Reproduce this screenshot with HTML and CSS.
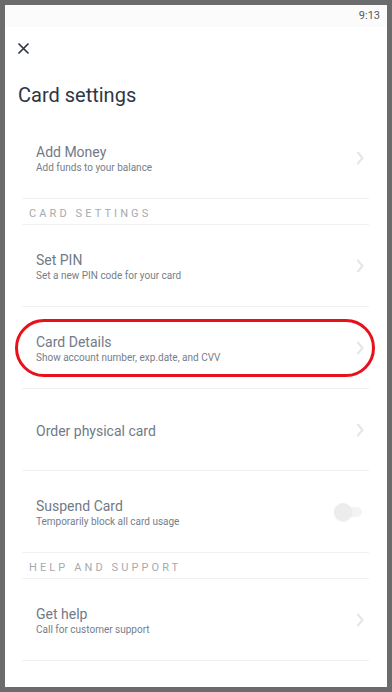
FILE: index.html
```html
<!DOCTYPE html>
<html lang="en">
<head>
	<meta charset="UTF-8">
	<meta name="viewport" content="width=device-width, initial-scale=1.0">
	<title>Card settings</title>
	<link rel="stylesheet" href="styles.css">
</head>
<body>
	<div class="screen">
		<div class="statusBar">9:13</div>

		<div class="closeRow">
			<svg class="closeIcon" width="11" height="11" viewBox="0 0 11 11">
				<path d="M1 1 L10 10 M10 1 L1 10" stroke="#2f3640" stroke-width="1.7" stroke-linecap="round" fill="none"/>
			</svg>
		</div>

		<h1 class="pageTitle">Card settings</h1>

		<div class="list">
			<div class="row">
				<div class="rowText">
					<div class="rowTitle">Add Money</div>
					<div class="rowSub">Add funds to your balance</div>
				</div>
				<svg class="chevron" width="8" height="14" viewBox="0 0 8 14"><path d="M1.5 1 L6.5 7 L1.5 13" stroke="#e2e5e9" stroke-width="2" fill="none"/></svg>
			</div>

			<div class="sectionHead">CARD SETTINGS</div>

			<div class="row">
				<div class="rowText">
					<div class="rowTitle">Set PIN</div>
					<div class="rowSub">Set a new PIN code for your card</div>
				</div>
				<svg class="chevron" width="8" height="14" viewBox="0 0 8 14"><path d="M1.5 1 L6.5 7 L1.5 13" stroke="#e2e5e9" stroke-width="2" fill="none"/></svg>
			</div>

			<div class="row highlighted">
				<div class="rowText">
					<div class="rowTitle">Card Details</div>
					<div class="rowSub">Show account number, exp.date, and CVV</div>
				</div>
				<svg class="chevron" width="8" height="14" viewBox="0 0 8 14"><path d="M1.5 1 L6.5 7 L1.5 13" stroke="#e2e5e9" stroke-width="2" fill="none"/></svg>
				<div class="redMark"></div>
			</div>

			<div class="row">
				<div class="rowText">
					<div class="rowTitle">Order physical card</div>
				</div>
				<svg class="chevron" width="8" height="14" viewBox="0 0 8 14"><path d="M1.5 1 L6.5 7 L1.5 13" stroke="#e2e5e9" stroke-width="2" fill="none"/></svg>
			</div>

			<div class="row">
				<div class="rowText">
					<div class="rowTitle">Suspend Card</div>
					<div class="rowSub">Temporarily block all card usage</div>
				</div>
				<div class="toggle"><div class="knob"></div></div>
			</div>

			<div class="sectionHead">HELP AND SUPPORT</div>

			<div class="row">
				<div class="rowText">
					<div class="rowTitle">Get help</div>
					<div class="rowSub">Call for customer support</div>
				</div>
				<svg class="chevron" width="8" height="14" viewBox="0 0 8 14"><path d="M1.5 1 L6.5 7 L1.5 13" stroke="#e2e5e9" stroke-width="2" fill="none"/></svg>
			</div>
		</div>
	</div>
</body>
</html>
```

FILE: styles.css
```css
html, body{
	margin: 0;
	padding: 0;
}
body{
	background: #6b6b6b;
	font-family: Roboto, "Liberation Sans", sans-serif;
	width: 392px;
	height: 692px;
	padding: 5px;
	box-sizing: border-box;
}
.screen{
	width: 382px;
	height: 682px;
	background: #ffffff;
	overflow: hidden;
}
.statusBar{
	height: 22px;
	background: #fbfbfb;
	color: #555a60;
	font-size: 11px;
	line-height: 22px;
	text-align: right;
	padding-right: 7px;
}
.closeRow{
	height: 11px;
	padding: 16px 0 0 13px;
}
.closeIcon{
	display: block;
}
.pageTitle{
	margin: 29px 0 10px 13px;
	font-size: 20px;
	line-height: 24px;
	font-weight: 400;
	color: #2f3643;
}
.list{
	margin: 0 18px 0 17px;
}
.row{
	height: 81px;
	border-bottom: 1px solid #eef0f2;
	display: flex;
	align-items: center;
	justify-content: space-between;
	padding: 0 5px 0 14px;
	position: relative;
}
.rowText{
	padding-top: 3px;
}
.rowTitle{
	font-size: 14px;
	line-height: 17px;
	color: #717a87;
}
.rowSub{
	font-size: 10px;
	line-height: 14px;
	color: #767e8a;
}
.chevron{
	display: block;
}
.sectionHead{
	height: 25px;
	border-bottom: 1px solid #eef0f2;
	padding-left: 7px;
	font-size: 11px;
	line-height: 29px;
	letter-spacing: 3.1px;
	color: #a6aab0;
}
.toggle{
	width: 26px;
	height: 10px;
	border-radius: 5px;
	background: #f3f3f3;
	position: relative;
	margin-right: 2px;
}
.knob{
	position: absolute;
	left: -2px;
	top: -4px;
	width: 18px;
	height: 18px;
	border-radius: 50%;
	background: #ececec;
	box-shadow: 0 1px 2px rgba(0,0,0,0.06);
}
.redMark{
	position: absolute;
	left: -7px;
	right: -6px;
	top: 12px;
	height: 52px;
	border: 3px solid #e8101a;
	border-radius: 30px;
}
```
